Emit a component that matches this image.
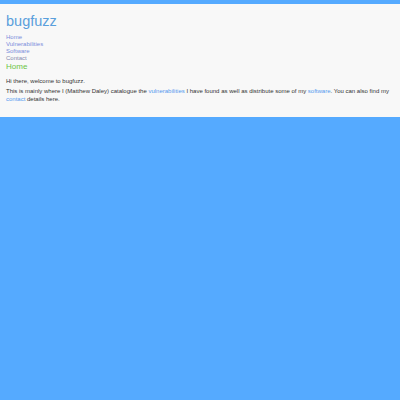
import React from 'react';

const navLinks = [
  { label: 'Home', color: 'text-[#7b8ddb]' },
  { label: 'Vulnerabilities', color: 'text-[#7b8ddb]' },
  { label: 'Software', color: 'text-[#7b8ddb]' },
  { label: 'Contact', color: 'text-[#848aae]' },
];

export default function App() {
  return (
    <div className="min-h-screen bg-[#55aaff] pt-[4px] font-['Liberation_Sans',Arial,sans-serif]">
      <div className="bg-[#f8f8f8] px-[6px] pt-[7px] pb-[14px]">
        <h1 className="text-[14.5px] leading-[20px] text-[#5a9fdc]">bugfuzz</h1>

        <ul className="mt-[3px] text-[6px] leading-[7px]">
          {navLinks.map((link) => (
            <li key={link.label}>
              <a href="#" className={link.color}>
                {link.label}
              </a>
            </li>
          ))}
        </ul>

        <h2 className="text-[8px] leading-[10px] text-[#6cc545]">Home</h2>

        <div className="mt-[5px] text-[6px] leading-[8px] text-[#333333]">
          <p>Hi there, welcome to bugfuzz.</p>
          <p className="mt-[2px]">
            This is mainly where I (Matthew Daley) catalogue the{' '}
            <a href="#" className="text-[#5599ee]">vulnerabilities</a> I have found as well as
            distribute some of my <a href="#" className="text-[#5599ee]">software</a>. You can also
            find my <a href="#" className="text-[#5599ee]">contact</a> details here.
          </p>
        </div>
      </div>
    </div>
  );
}
